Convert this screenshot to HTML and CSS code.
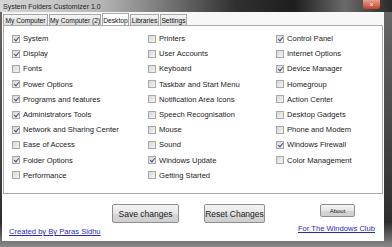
FILE: index.html
```html
<!DOCTYPE html>
<html>
<head>
    <link rel="stylesheet" href="styles.css">
    <title>System Folders Customizer 1.0</title>
</head>
<body>
    <div class="window">
        <div class="titlebar">
            <span class="title">System Folders Customizer 1.0</span>
            <span class="close">&times;</span>
        </div>
        <div class="client">
            <div class="tabs">
                <span class="tab tab-mc">My Computer</span>
                <span class="tab tab-mc2">My Computer (2)</span>
                <span class="tab tab-desk active">Desktop</span>
                <span class="tab tab-lib">Libraries</span>
                <span class="tab tab-set">Settings</span>
            </div>
            <div class="panel">
                <div class="col col1">
                    <label class="item"><span class="box on"></span>System</label>
                    <label class="item"><span class="box on"></span>Display</label>
                    <label class="item"><span class="box"></span>Fonts</label>
                    <label class="item"><span class="box on"></span>Power Options</label>
                    <label class="item"><span class="box on"></span>Programs and features</label>
                    <label class="item"><span class="box on"></span>Administrators Tools</label>
                    <label class="item"><span class="box on"></span>Network and Sharing Center</label>
                    <label class="item"><span class="box"></span>Ease of Access</label>
                    <label class="item"><span class="box on"></span>Folder Options</label>
                    <label class="item"><span class="box"></span>Performance</label>
                </div>
                <div class="col col2">
                    <label class="item"><span class="box"></span>Printers</label>
                    <label class="item"><span class="box"></span>User Accounts</label>
                    <label class="item"><span class="box"></span>Keyboard</label>
                    <label class="item"><span class="box"></span>Taskbar and Start Menu</label>
                    <label class="item"><span class="box"></span>Notification Area Icons</label>
                    <label class="item"><span class="box"></span>Speech Recognisation</label>
                    <label class="item"><span class="box"></span>Mouse</label>
                    <label class="item"><span class="box"></span>Sound</label>
                    <label class="item"><span class="box on"></span>Windows Update</label>
                    <label class="item"><span class="box"></span>Getting Started</label>
                </div>
                <div class="col col3">
                    <label class="item"><span class="box on"></span>Control Panel</label>
                    <label class="item"><span class="box"></span>Internet Options</label>
                    <label class="item"><span class="box on"></span>Device Manager</label>
                    <label class="item"><span class="box"></span>Homegroup</label>
                    <label class="item"><span class="box"></span>Action Center</label>
                    <label class="item"><span class="box"></span>Desktop Gadgets</label>
                    <label class="item"><span class="box"></span>Phone and Modem</label>
                    <label class="item"><span class="box on"></span>Windows Firewall</label>
                    <label class="item"><span class="box"></span>Color Management</label>
                </div>
            </div>
            <div class="footer">
                <div class="credit">
                    <a class="link" href="#">Created by By Paras Sidhu</a>
                </div>
                <button class="btn big save">Save changes</button>
                <button class="btn big reset">Reset Changes</button>
                <div class="side">
                    <button class="btn small">About</button>
                    <a class="link" href="#">For The Windows Club</a>
                </div>
            </div>
        </div>
    </div>
</body>
</html>
```

FILE: styles.css
```css
body {
    margin: 0;
    width: 392px;
    height: 247px;
    overflow: hidden;
    font-family: "Liberation Sans", Arial, sans-serif;
    background: #3c3c3c;
}

.window {
    width: 392px;
    height: 247px;
    display: flex;
    flex-direction: column;
    background: linear-gradient(to bottom, #6a6a6a, #2e2e2e 90%, #8a8a8a);
}

.titlebar {
    height: 12px;
    flex-shrink: 0;
    display: flex;
    align-items: center;
    justify-content: space-between;
    padding: 0 12px 0 3px;
    background: linear-gradient(to right, #d6d6d6 0%, #b8b8b8 25%, #6c6c6c 45%, #303030 60%, #1e1e1e 75%, #6a6a6a 88%, #2a2a2a 100%);
}

.title {
    font-size: 7px;
    color: #222;
}

.close {
    width: 17px;
    height: 9px;
    margin-top: -4px;
    border-radius: 0 0 3px 3px;
    background: linear-gradient(to bottom, #e8a08a, #c0432c);
    color: #fff;
    font-size: 7px;
    line-height: 9px;
    text-align: center;
}

.client {
    flex: 1;
    margin: 0 8px 6px 2px;
    background: #fff;
    display: flex;
    flex-direction: column;
}

.tabs {
    height: 13px;
    display: flex;
    align-items: flex-end;
    padding-left: 1px;
    background: #f7f7f7;
}

.tab {
    height: 11px;
    line-height: 11px;
    margin-right: 1px;
    font-size: 6.7px;
    color: #111;
    text-align: center;
    white-space: nowrap;
    overflow: hidden;
    box-sizing: border-box;
    border: 1px solid #a9a9a9;
    border-bottom: none;
    background: linear-gradient(to bottom, #f4f4f4, #dcdcdc);
}

.tab-mc {
    width: 45px;
}

.tab-mc2 {
    width: 52px;
}

.tab-desk {
    width: 27px;
}

.tab-lib {
    width: 29px;
}

.tab-set {
    width: 27px;
}

.tab.active {
    height: 13px;
    line-height: 13px;
    margin-bottom: -1px;
    background: #fff;
}

.panel {
    height: 169px;
    margin: 0 1px;
    border: 1px solid #a9a9a9;
    display: flex;
    padding: 5px 0 0 8px;
    box-sizing: border-box;
}

.col {
    display: flex;
    flex-direction: column;
}

.col1 {
    width: 136px;
}

.col2 {
    width: 128px;
}

.item {
    height: 15.2px;
    display: flex;
    align-items: center;
    font-size: 7.6px;
    color: #222;
    white-space: nowrap;
}

.box {
    width: 6px;
    height: 6px;
    margin-right: 3px;
    border: 1px solid #a8a8a8;
    background: linear-gradient(to bottom right, #d8d8d8, #f4f4f4);
    position: relative;
}

.box.on::after {
    content: "";
    position: absolute;
    left: 2px;
    top: 0;
    width: 2px;
    height: 4px;
    border: solid #3d4f8c;
    border-width: 0 1px 1px 0;
    transform: rotate(40deg);
}

.footer {
    flex: 1;
    display: flex;
    align-items: flex-start;
    padding: 10px 8px 0 7px;
}

.credit {
    width: 103px;
    flex-shrink: 0;
    padding-top: 16px;
}

.link {
    font-size: 7.6px;
    color: #2a2ab0;
    text-decoration: underline;
    white-space: nowrap;
}

.btn {
    font-family: "Liberation Sans", Arial, sans-serif;
    color: #222;
    border: 1px solid #8e8e8e;
    border-radius: 2px;
    background: linear-gradient(to bottom, #f4f4f4 0%, #e6e6e6 50%, #d6d6d6 51%, #cfcfcf 100%);
    padding: 0;
    margin: 0;
    white-space: nowrap;
    flex-shrink: 0;
}

.big {
    height: 19px;
    font-size: 8.5px;
}

.save {
    width: 67px;
}

.reset {
    width: 61px;
    margin-left: 25px;
}

.side {
    margin-left: auto;
    margin-right: 1px;
    display: flex;
    flex-direction: column;
    align-items: flex-end;
}

.small {
    width: 35px;
    height: 13px;
    font-size: 6px;
    margin-right: 20px;
}

.side .link {
    margin-top: 7px;
}
```
